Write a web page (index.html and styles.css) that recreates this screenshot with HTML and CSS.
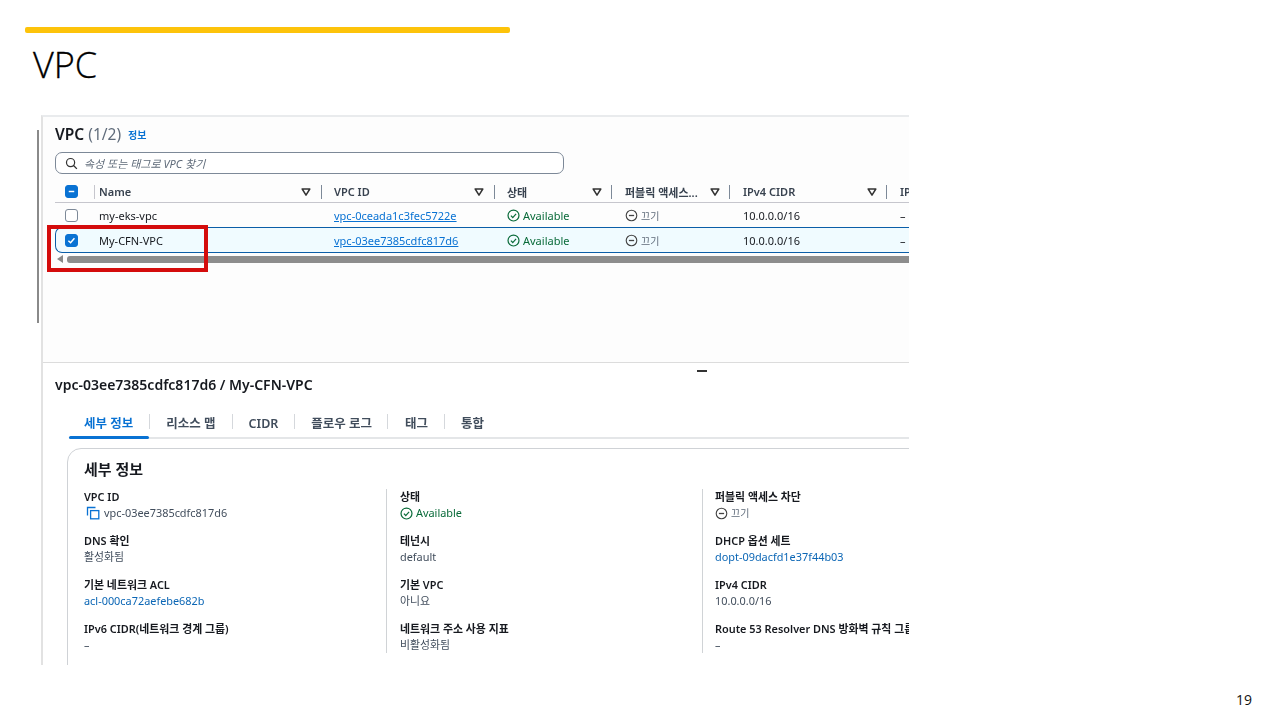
FILE: index.html
```html
<!DOCTYPE html>
<html lang="ko">
<head>
<meta charset="utf-8">
<title>VPC</title>
<link rel="stylesheet" href="styles.css">
</head>
<body>
<svg class="defs" width="0" height="0" aria-hidden="true">
  <symbol id="sort" viewBox="0 0 10 10"><path d="M1.2 2h7.6L5 8.2z" fill="none" stroke="#333" stroke-width="1.5" stroke-linejoin="round"/></symbol>
  <symbol id="ok" viewBox="0 0 14 14"><circle cx="7" cy="7" r="5.9" fill="none" stroke="#0a6b3a" stroke-width="1.3"/><path d="M4.2 7.2l2 2 3.6-4" fill="none" stroke="#0a6b3a" stroke-width="1.3"/></symbol>
  <symbol id="off" viewBox="0 0 14 14"><circle cx="7" cy="7" r="5.7" fill="none" stroke="#444" stroke-width="1.2"/><path d="M4.2 7h5.6" fill="none" stroke="#444" stroke-width="1.4"/></symbol>
</svg>
<main class="slide">
  <div class="accent"></div>
  <h1 class="title">VPC</h1>
  <section class="panel">
    <div class="list">
      <h2 class="list-title">VPC <span class="count">(1/2)</span> <a class="info">정보</a></h2>
      <div class="search">
        <svg class="search-icon" viewBox="0 0 14 14"><circle cx="6" cy="6" r="4.4" fill="none" stroke="#333" stroke-width="1.3"/><path d="M9.2 9.2l3.6 3.6" stroke="#333" stroke-width="1.4"/></svg>
        <span>속성 또는 태그로 VPC 찾기</span>
      </div>
      <div class="row head">
        <div class="cell check"><span class="box on"><svg viewBox="0 0 12 12"><path d="M3 6h6" stroke="#fff" stroke-width="1.6"/></svg></span><i class="sep light"></i></div>
        <div class="cell">Name<svg class="sort"><use href="#sort"/></svg><i class="sep"></i></div>
        <div class="cell">VPC ID<svg class="sort"><use href="#sort"/></svg><i class="sep"></i></div>
        <div class="cell">상태<svg class="sort"><use href="#sort"/></svg><i class="sep"></i></div>
        <div class="cell">퍼블릭 액세스...<svg class="sort"><use href="#sort"/></svg><i class="sep"></i></div>
        <div class="cell">IPv4 CIDR<svg class="sort"><use href="#sort"/></svg><i class="sep"></i></div>
        <div class="cell">IPv</div>
      </div>
      <div class="row">
        <div class="cell check"><span class="box"></span></div>
        <div class="cell">my-eks-vpc</div>
        <div class="cell"><a class="link">vpc-0ceada1c3fec5722e</a></div>
        <div class="cell ok"><svg class="status"><use href="#ok"/></svg>Available</div>
        <div class="cell off"><svg class="status"><use href="#off"/></svg>끄기</div>
        <div class="cell">10.0.0.0/16</div>
        <div class="cell">–</div>
      </div>
      <div class="row selected">
        <div class="cell check"><span class="box on"><svg viewBox="0 0 12 12"><path d="M2.6 6.2l2.4 2.3 4.2-5" fill="none" stroke="#fff" stroke-width="1.6"/></svg></span></div>
        <div class="cell">My-CFN-VPC</div>
        <div class="cell"><a class="link">vpc-03ee7385cdfc817d6</a></div>
        <div class="cell ok"><svg class="status"><use href="#ok"/></svg>Available</div>
        <div class="cell off"><svg class="status"><use href="#off"/></svg>끄기</div>
        <div class="cell">10.0.0.0/16</div>
        <div class="cell">–</div>
      </div>
      <div class="hscroll"><span class="arrow"></span><span class="thumb"></span></div>
      <div class="highlight"></div>
    </div>
    <div class="detail">
      <div class="handle"></div>
      <h2 class="detail-title">vpc-03ee7385cdfc817d6 / My-CFN-VPC</h2>
      <nav class="tabs">
        <a class="tab active">세부 정보</a>
        <a class="tab">리소스 맵</a>
        <a class="tab">CIDR</a>
        <a class="tab narrow">플로우 로그</a>
        <a class="tab wide">태그</a>
        <a class="tab">통합</a>
      </nav>
      <div class="card">
        <h3 class="card-title">세부 정보</h3>
        <div class="columns">
          <div class="col">
            <div class="field"><b>VPC ID</b><span class="copy"><svg class="copy-icon" viewBox="0 0 14 14"><path d="M1.5 9.5V1.5h8" fill="none" stroke="#0972d3" stroke-width="1.3"/><rect x="4.6" y="4.6" width="8.2" height="8.2" fill="none" stroke="#0972d3" stroke-width="1.3"/></svg>vpc-03ee7385cdfc817d6</span></div>
            <div class="field"><b>DNS 확인</b><span>활성화됨</span></div>
            <div class="field"><b>기본 네트워크 ACL</b><a class="plain-link">acl-000ca72aefebe682b</a></div>
            <div class="field"><b>IPv6 CIDR(네트워크 경계 그룹)</b><span>–</span></div>
          </div>
          <div class="col">
            <div class="field"><b>상태</b><span class="ok"><svg class="status"><use href="#ok"/></svg>Available</span></div>
            <div class="field"><b>테넌시</b><span>default</span></div>
            <div class="field"><b>기본 VPC</b><span>아니요</span></div>
            <div class="field"><b>네트워크 주소 사용 지표</b><span>비활성화됨</span></div>
          </div>
          <div class="col last">
            <div class="field"><b>퍼블릭 액세스 차단</b><span class="off"><svg class="status"><use href="#off"/></svg>끄기</span></div>
            <div class="field"><b>DHCP 옵션 세트</b><a class="plain-link">dopt-09dacfd1e37f44b03</a></div>
            <div class="field"><b>IPv4 CIDR</b><span>10.0.0.0/16</span></div>
            <div class="field"><b>Route 53 Resolver DNS 방화벽 규칙 그룹</b><span>–</span></div>
          </div>
        </div>
      </div>
    </div>
  </section>
  <div class="page-num">19</div>
</main>
</body>
</html>
```
FILE: styles.css
```css
* { box-sizing: border-box; }
html, body { margin: 0; padding: 0; background: #fff; }
body { font-family: "Noto Sans", "Noto Sans CJK KR", sans-serif; color: #16191f; }
.defs { position: absolute; }
.slide { position: relative; width: 1280px; height: 720px; padding: 27px 0 0 25px; overflow: hidden; }
.slide::before { content: ""; position: absolute; left: 37px; top: 130px; width: 2px; height: 193px; background: #8a8a8a; }
.accent { width: 485px; height: 6px; background: #fdc30a; border-radius: 2px; }
.title { margin: 7px 0 0 8px; font: 300 36px/50px "Open Sans", sans-serif; -webkit-text-stroke: .3px #000; color: #000; height: 49px; }
.page-num { position: absolute; right: 28px; top: 690px; font: 14px/20px "Open Sans", sans-serif; color: #111; }

.panel { position: relative; margin: 26px 0 0 16px; width: 868px; height: 550px; border-top: 2px solid #e9ebed; border-left: 2px solid #e2e2e2; overflow: hidden; filter: blur(.3px); background: #fff; }

.list { position: relative; height: 246px; padding: 7px 0 0 12px; border-bottom: 1px solid #dcdcdc; background: #fdfdfd; }
.list-title { margin: 0; font-size: 15.5px; line-height: 21px; font-weight: 600; }
.count { font-weight: 400; color: #5f6b7a; }
.info { font-size: 10px; font-weight: 700; color: #0972d3; margin-left: 3px; vertical-align: 1px; }
.search { display: flex; align-items: center; gap: 6px; width: 509px; height: 22px; margin-top: 6px; padding-left: 9px; border: 1px solid #7d8998; border-radius: 7px; background: #fff; font-size: 11px; font-style: italic; color: #5f6b7a; }
.search-icon { width: 13px; height: 13px; }

.row { position: relative; display: grid; grid-template-columns: 44px 235px 173px 118px 118px 157px 100px; width: 860px; height: 25px; align-items: center; font-size: 11px; }
.row .cell { position: relative; height: 100%; display: flex; align-items: center; white-space: nowrap; }
.head { height: 22px; margin-top: 7px; border-bottom: 1px solid #c6c6cd; font-weight: 600; color: #38424f; }
.check { padding-left: 10px; }
.box { display: flex; width: 13px; height: 13px; border: 1px solid #7d8998; border-radius: 3px; background: #fff; }
.box.on { background: #0972d3; border-color: #0972d3; }
.box svg { width: 100%; height: 100%; }
.sort { position: absolute; right: 23px; top: 6px; width: 10px; height: 10px; }
.sep { position: absolute; right: 13px; top: 4px; width: 1px; height: 14px; background: #7d8998; }
.head .cell:nth-child(2) .sep, .head .cell:nth-child(3) .sep { right: 12px; }
.sep.light { right: 4px; background: #c6c6cd; }
.link { color: #0972d3; text-decoration: underline; }
.ok { color: #0a6b3a; }
.off { color: #5f6b7a; font-size: 10px; }
.status { flex: none; width: 13px; height: 13px; margin-right: 3px; vertical-align: -3px; }
.selected { grid-template-columns: 43px 235px 173px 118px 118px 157px 100px; height: 26px; margin-top: -1px; background: #f0fbff; border: 1px solid #0b5ea8; border-right: 0; border-radius: 7px 0 0 7px; }
.selected .check { padding-left: 9px; }
.hscroll { display: flex; align-items: center; gap: 4px; height: 8px; margin: 2px 0 0 2px; }
.arrow { width: 0; height: 0; border: 4px solid transparent; border-right: 6px solid #888; border-left: 0; }
.thumb { flex: 1; height: 7px; background: #8d8d8d; border-radius: 3px 0 0 3px; }
.highlight { position: absolute; left: 4px; top: 108px; width: 161px; height: 47px; border: 4px solid #d40c0c; }

.detail { position: relative; padding: 12px 0 0 12px; }
.handle { position: absolute; left: 654px; top: 7px; width: 10px; height: 2px; background: #333; }
.detail-title { margin: 0; font-size: 14px; line-height: 20px; font-weight: 600; color: #16191f; }
.tabs { display: flex; height: 30px; margin: 14px 0 0 14px; border-bottom: 2px solid #e4e6e8; width: 840px; }
.tab { position: relative; height: 30px; padding: 6px 16px 0 17px; font-size: 12.5px; line-height: 18px; font-weight: 600; color: #414d5c; white-space: nowrap; }
.tab + .tab::before { content: ""; position: absolute; left: 0; top: 5px; width: 1px; height: 15px; background: #d5d8dc; }
.tab.active { padding-left: 15px; }
.tab.narrow { padding-right: 15px; }
.tab.wide { padding-left: 18px; }
.active { color: #0972d3; }
.active::after { content: ""; position: absolute; left: 0; right: 0; bottom: 0; height: 3px; background: #0972d3; border-radius: 2px; }
.card { width: 880px; height: 260px; margin: 9px 0 0 12px; padding: 9px 0 0 16px; border: 1px solid #cfd2d6; border-radius: 14px; background: #fff; }
.card-title { margin: 0; font-size: 15px; line-height: 22px; font-weight: 600; }
.columns { display: grid; grid-template-columns: 302px 316px 260px; margin-top: 9px; }
.col { display: flex; flex-direction: column; gap: 12px; height: 164px; white-space: nowrap; }
.col + .col { border-left: 1px solid #d0d3d6; padding-left: 13px; }
.col.last { padding-left: 12px; }
.field { display: flex; flex-direction: column; font-size: 10.9px; line-height: 16px; color: #414d5c; }
.field b { font-weight: 600; color: #16191f; }
.plain-link { color: #0b66b5; }
.copy { display: flex; align-items: center; }
.copy-icon { width: 14px; height: 14px; margin: 0 4px 0 2px; }
.field .off { font-size: 10px; }
```
